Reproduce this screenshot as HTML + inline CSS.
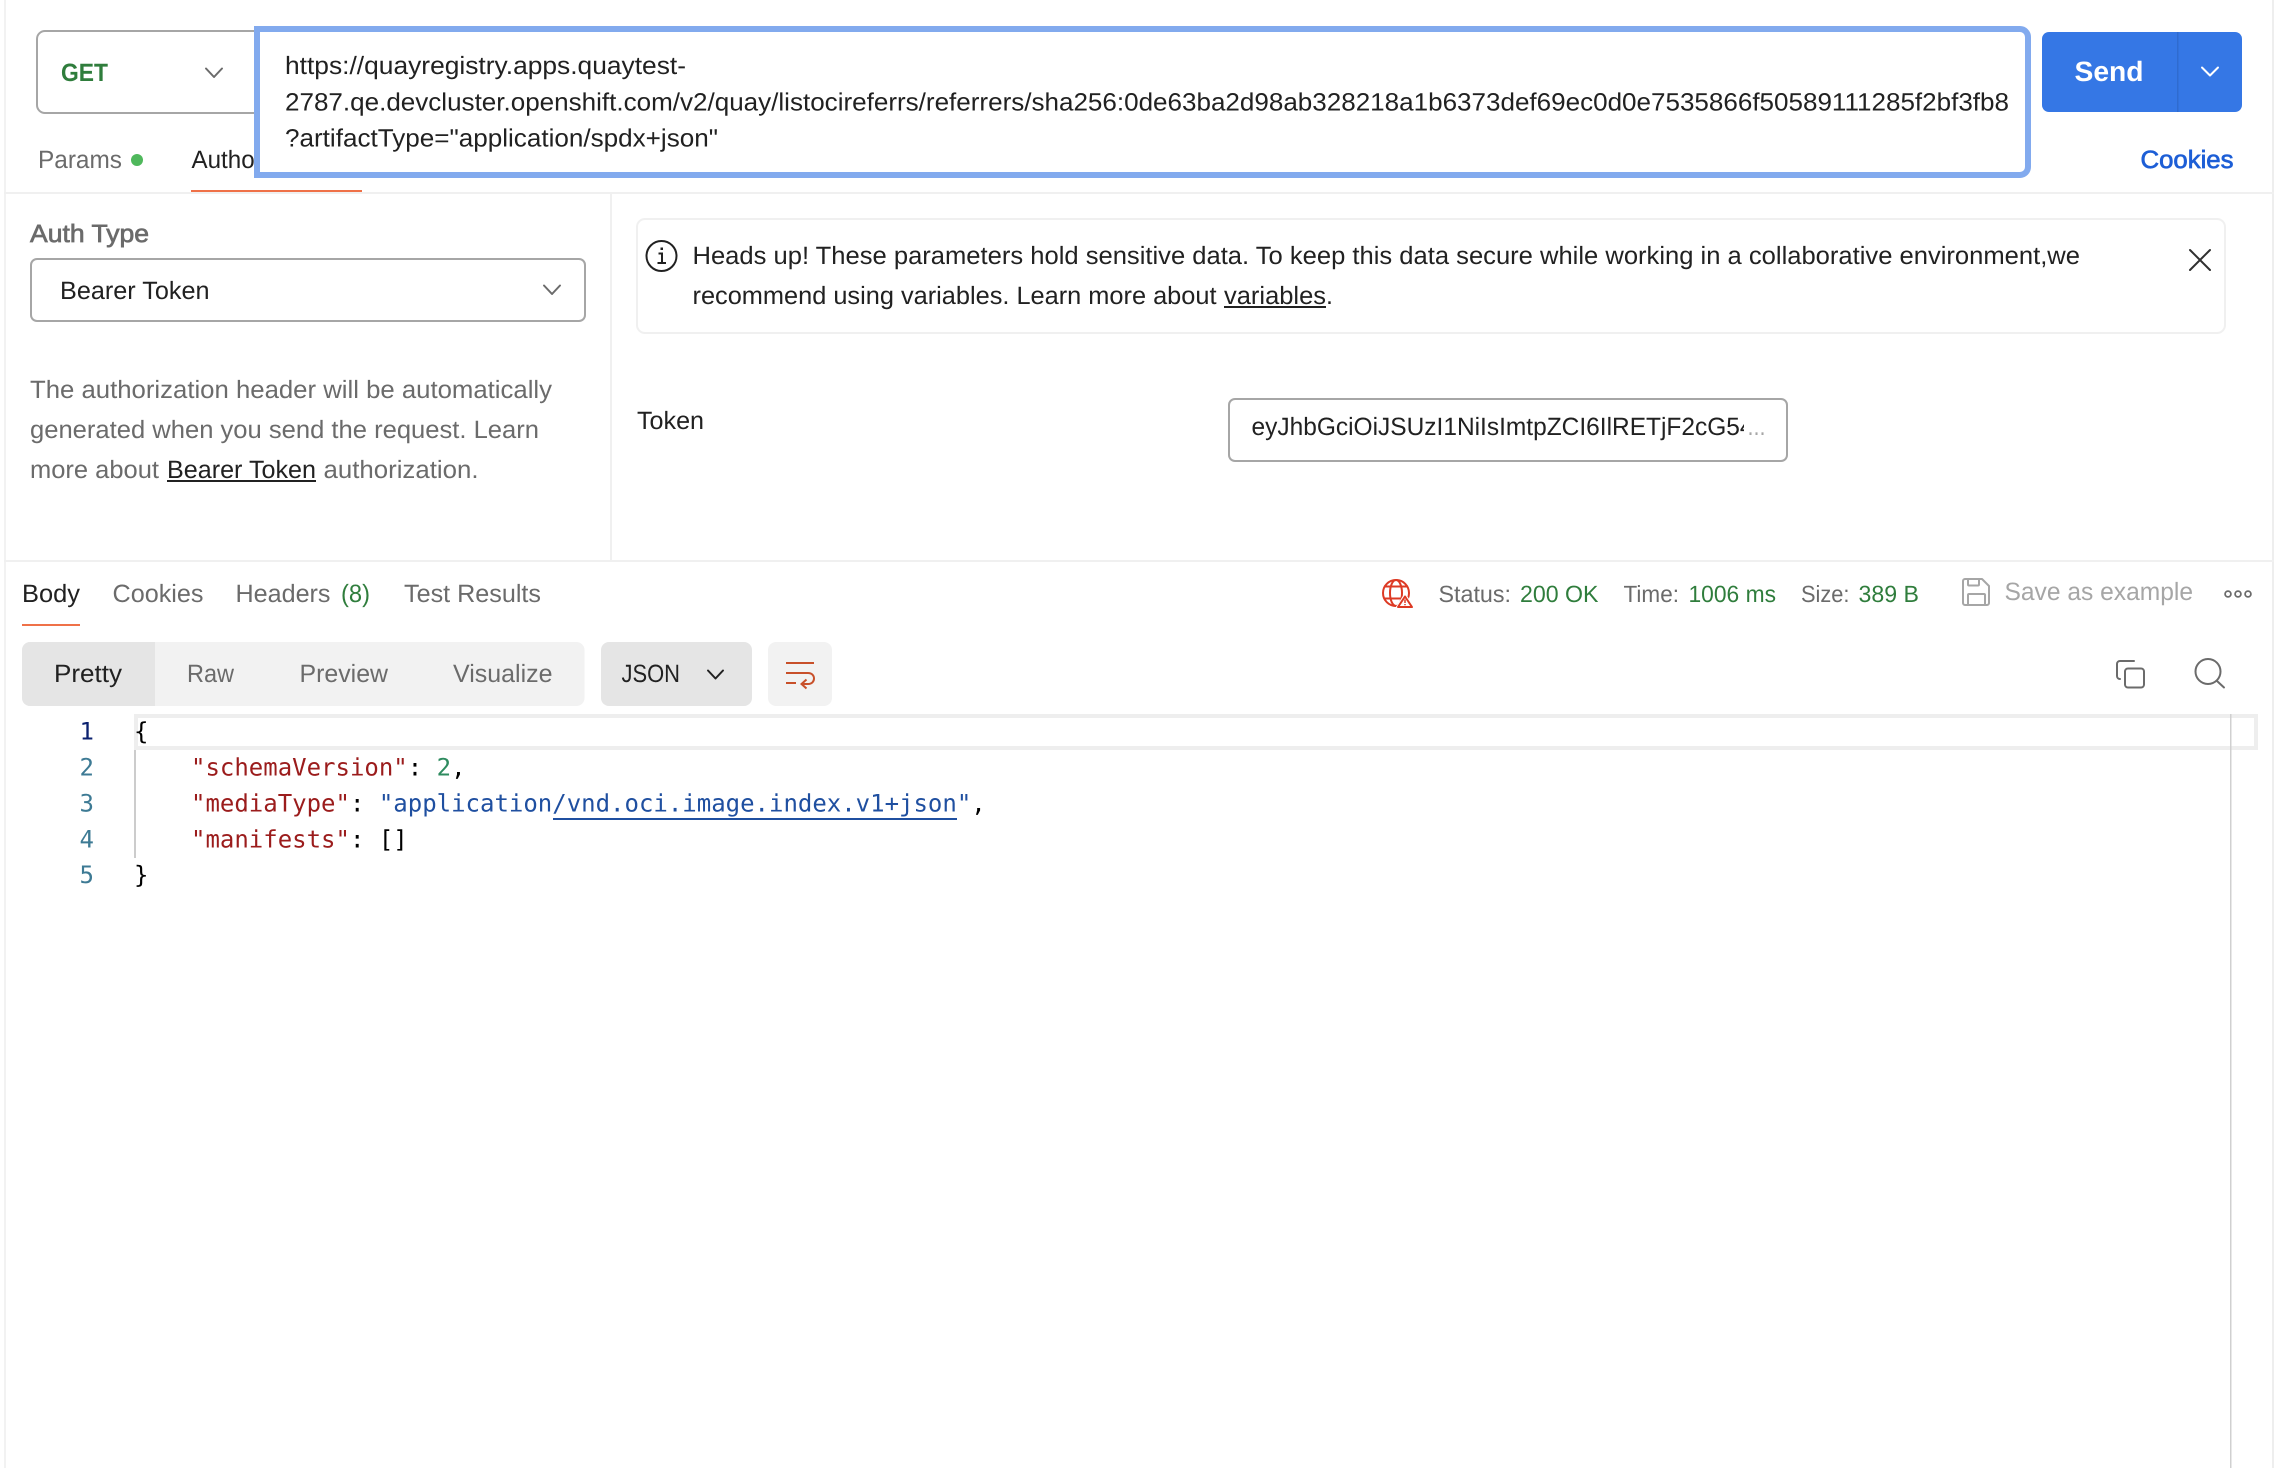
<!DOCTYPE html>
<html lang="en">
<head>
<meta charset="utf-8">
<title>Postman request</title>
<style>
html,body{margin:0;padding:0;background:#fff;width:2274px;height:1468px;overflow:hidden}
svg{display:block;position:absolute;left:0;top:0}
text{font-family:"Liberation Sans",Arial,sans-serif;font-size:25px;fill:#212121;white-space:pre;text-rendering:geometricPrecision}
.g{fill:#6b6b6b}
.gr{fill:#2f7d3c}
.m{stroke-width:.7px}
.s{font-size:23.5px}
.c{font-family:"DejaVu Sans Mono","Liberation Mono",monospace;font-size:24px;fill:#000}
.k{fill:#9b1c1c}
.v{fill:#1f4fa0}
.n{fill:#3d7a94}
.ic{fill:none;stroke:#6b6b6b;stroke-width:2;stroke-linecap:round;stroke-linejoin:round}
</style>
</head>
<body>
<svg width="2274" height="1468" viewBox="0 0 2274 1468" xmlns="http://www.w3.org/2000/svg">
<defs><clipPath id="tk"><rect x="1240" y="405" width="504" height="50"/></clipPath></defs>

<!-- page frame -->
<rect x="4" y="0" width="2" height="1468" fill="#f2f2f2"/>
<rect x="2272" y="0" width="2" height="1468" fill="#eeeeee"/>
<rect x="4" y="192" width="2270" height="2" fill="#f0f0f0"/>
<rect x="4" y="560" width="2270" height="2" fill="#f0f0f0"/>
<rect x="610" y="194" width="2" height="366" fill="#f0f0f0"/>

<!-- method selector -->
<rect x="37" y="31" width="260" height="82" rx="8" fill="#fff" stroke="#a6a6a6" stroke-width="2"/>
<text x="61" y="81" textLength="47" lengthAdjust="spacingAndGlyphs" font-weight="700" style="fill:#2f7d3c">GET</text>
<path class="ic" d="M206 68.500l8 8.500l8-8.500"/>

<!-- tabs -->
<text class="g" x="38" y="168" textLength="84" lengthAdjust="spacingAndGlyphs">Params</text>
<circle cx="137" cy="160" r="6" fill="#4fb85c"/>
<text x="191.500" y="168" textLength="141" lengthAdjust="spacingAndGlyphs">Authorization</text>
<rect x="191" y="190" width="171" height="2" fill="#ef7148"/>

<!-- URL field -->
<path d="M257 29H2020a8 8 0 0 1 8 8V167a8 8 0 0 1-8 8H257Z" fill="#fff" stroke="#82aaee" stroke-width="6"/>
<text x="285" y="74" textLength="401" lengthAdjust="spacingAndGlyphs">https://quayregistry.apps.quaytest-</text>
<text x="285" y="110.500" textLength="1724" lengthAdjust="spacingAndGlyphs">2787.qe.devcluster.openshift.com/v2/quay/listocireferrs/referrers/sha256:0de63ba2d98ab328218a1b6373def69ec0d0e7535866f50589111285f2bf3fb8</text>
<text x="285" y="146.500" textLength="433" lengthAdjust="spacingAndGlyphs">?artifactType="application/spdx+json"</text>

<!-- send -->
<rect x="2042" y="32" width="200" height="80" rx="7" fill="#3577e5"/>
<rect x="2177" y="32" width="1.500" height="80" fill="#2f6bcf"/>
<text x="2074.500" y="81" textLength="69" lengthAdjust="spacingAndGlyphs" font-weight="700" style="font-size:28px;fill:#fff">Send</text>
<path d="M2202 67.500l8 8l8-8" fill="none" stroke="#fff" stroke-width="2" stroke-linecap="round" stroke-linejoin="round"/>
<text x="2140.500" y="168" textLength="93" lengthAdjust="spacingAndGlyphs" class="m" style="fill:#1d5ed6;stroke:#1d5ed6">Cookies</text>

<!-- auth left -->
<text x="30" y="242" textLength="119" lengthAdjust="spacingAndGlyphs" class="m" style="fill:#6b6b6b;stroke:#6b6b6b">Auth Type</text>
<rect x="31" y="259" width="554" height="62" rx="6" fill="#fff" stroke="#a6a6a6" stroke-width="2"/>
<text x="60" y="299" textLength="149.500" lengthAdjust="spacingAndGlyphs">Bearer Token</text>
<path class="ic" d="M544 285.500l8 8.500l8-8.500"/>
<text class="g" x="30" y="398" textLength="522" lengthAdjust="spacingAndGlyphs">The authorization header will be automatically</text>
<text class="g" x="30" y="438" textLength="509" lengthAdjust="spacingAndGlyphs">generated when you send the request. Learn</text>
<text class="g" x="30" y="478" textLength="129" lengthAdjust="spacingAndGlyphs">more about</text>
<text x="167" y="478" textLength="149" lengthAdjust="spacingAndGlyphs">Bearer Token</text>
<rect x="167" y="480" width="149" height="2" fill="#212121"/>
<text class="g" x="323.500" y="478" textLength="155" lengthAdjust="spacingAndGlyphs">authorization.</text>

<!-- alert -->
<rect x="637" y="219" width="1588" height="114" rx="8" fill="#fff" stroke="#f0f0f0" stroke-width="2"/>
<circle cx="661.500" cy="256" r="15" fill="none" stroke="#212121" stroke-width="2"/>
<path d="M658.500 253.500h3.500v9.500M657.500 263h8.500" fill="none" stroke="#212121" stroke-width="2"/>
<rect x="660.500" y="247.500" width="2.500" height="2.500" fill="#212121"/>
<text x="692.500" y="264" textLength="1387.500" lengthAdjust="spacingAndGlyphs">Heads up! These parameters hold sensitive data. To keep this data secure while working in a collaborative environment,we</text>
<text x="692.500" y="304" textLength="524" lengthAdjust="spacingAndGlyphs">recommend using variables. Learn more about</text>
<text x="1224" y="304" textLength="102" lengthAdjust="spacingAndGlyphs">variables</text>
<rect x="1224" y="306" width="102" height="2" fill="#212121"/>
<text x="1326" y="304">.</text>
<path d="M2190 250l20 20M2210 250l-20 20" fill="none" stroke="#303030" stroke-width="2" stroke-linecap="round"/>

<!-- token -->
<text x="637" y="429" textLength="67" lengthAdjust="spacingAndGlyphs">Token</text>
<rect x="1229" y="399" width="558" height="62" rx="6" fill="#fff" stroke="#a6a6a6" stroke-width="2"/>
<text x="1251.500" y="435" textLength="502" lengthAdjust="spacingAndGlyphs" clip-path="url(#tk)">eyJhbGciOiJSUzI1NiIsImtpZCI6IlRETjF2cG54</text>
<text x="1747.500" y="435" textLength="18" lengthAdjust="spacingAndGlyphs" style="fill:#a6a6a6">...</text>

<!-- response tabs -->
<text x="22" y="602" textLength="58" lengthAdjust="spacingAndGlyphs">Body</text>
<rect x="22" y="624" width="58" height="2" fill="#ef7148"/>
<text class="g" x="112.500" y="602" textLength="91" lengthAdjust="spacingAndGlyphs">Cookies</text>
<text class="g" x="235.500" y="602" textLength="95" lengthAdjust="spacingAndGlyphs">Headers</text>
<text class="gr" x="341" y="602" textLength="29" lengthAdjust="spacingAndGlyphs">(8)</text>
<text class="g" x="404" y="602" textLength="137" lengthAdjust="spacingAndGlyphs">Test Results</text>

<!-- network globe with warning -->
<g fill="none" stroke="#dd3a24" stroke-width="2">
<circle cx="1396" cy="593" r="13"/>
<ellipse cx="1396" cy="593" rx="6" ry="13"/>
<path d="M1385 586.500H1407M1384 598.500H1401"/>
</g>
<path d="M1405 592.500L1416 610H1394Z" fill="#fff"/>
<path d="M1405 596.500L1412 607H1398Z" fill="#fff" stroke="#dd3a24" stroke-width="2" stroke-linejoin="round"/>
<path d="M1405 599.500v3.500M1405 604v1.200" stroke="#dd3a24" stroke-width="1.500" fill="none"/>

<!-- status -->
<text class="g s" x="1438.500" y="602" textLength="72.500" lengthAdjust="spacingAndGlyphs">Status:</text>
<text class="gr s" x="1520" y="602" textLength="78.500" lengthAdjust="spacingAndGlyphs">200 OK</text>
<text class="g s" x="1623.500" y="602" textLength="55.500" lengthAdjust="spacingAndGlyphs">Time:</text>
<text class="gr s" x="1688.500" y="602" textLength="87.500" lengthAdjust="spacingAndGlyphs">1006 ms</text>
<text class="g s" x="1801" y="602" textLength="48.500" lengthAdjust="spacingAndGlyphs">Size:</text>
<text class="gr s" x="1858.500" y="602" textLength="60.500" lengthAdjust="spacingAndGlyphs">389 B</text>

<!-- save -->
<g fill="none" stroke="#a6a6a6" stroke-width="2" stroke-linejoin="round">
<path d="M1965 579H1982L1989 586V603a2 2 0 0 1-2 2H1965a2 2 0 0 1-2-2V581a2 2 0 0 1 2-2Z"/>
<path d="M1968 579V584.500a1 1 0 0 0 1 1H1978a1 1 0 0 0 1-1V579"/>
<path d="M1968 605V595a1 1 0 0 1 1-1H1984a1 1 0 0 1 1 1V605"/>
</g>
<text x="2004.500" y="600" textLength="188.500" lengthAdjust="spacingAndGlyphs" style="fill:#a6a6a6">Save as example</text>
<g fill="none" stroke="#6b6b6b" stroke-width="1.800">
<circle cx="2228" cy="594" r="2.900"/><circle cx="2238" cy="594" r="2.900"/><circle cx="2248" cy="594" r="2.900"/>
</g>

<!-- response toolbar -->
<rect x="22" y="642" width="562.500" height="64" rx="8" fill="#f2f2f2"/>
<path d="M30 642H155V706H30a8 8 0 0 1-8-8V650a8 8 0 0 1 8-8Z" fill="#e5e5e5"/>
<text x="54" y="682" textLength="68" lengthAdjust="spacingAndGlyphs">Pretty</text>
<text class="g" x="187" y="682" textLength="47" lengthAdjust="spacingAndGlyphs">Raw</text>
<text class="g" x="299.500" y="682" textLength="88.500" lengthAdjust="spacingAndGlyphs">Preview</text>
<text class="g" x="453" y="682" textLength="99.500" lengthAdjust="spacingAndGlyphs">Visualize</text>
<rect x="601" y="642" width="151" height="64" rx="8" fill="#e5e5e5"/>
<text x="621.500" y="682" textLength="58.500" lengthAdjust="spacingAndGlyphs">JSON</text>
<path d="M708 670.500l7.500 8l7.500-8" fill="none" stroke="#212121" stroke-width="2" stroke-linecap="round" stroke-linejoin="round"/>
<rect x="768" y="642" width="64" height="64" rx="8" fill="#f2f2f2"/>
<g fill="none" stroke="#c8502a" stroke-width="2">
<path d="M786 663H814"/>
<path d="M786 673H808C816 673 816 684 808 684H802"/>
<path d="M786 683H796"/>
<path d="M806.500 679.500L801.500 684L806.500 688.500"/>
</g>

<!-- copy + search -->
<rect x="2125" y="668.500" width="19" height="19" rx="3" class="ic"/>
<path class="ic" d="M2134 661H2120a3 3 0 0 0-3 3V676a3 3 0 0 0 3 3"/>
<circle cx="2208" cy="671.500" r="12.500" class="ic"/>
<path class="ic" d="M2217 681L2224 687.500"/>

<!-- editor -->
<rect x="136" y="716" width="2120" height="32" fill="#fff" stroke="#eeeeee" stroke-width="4"/>
<rect x="134" y="750" width="2" height="108" fill="#cccccc"/>
<rect x="2230" y="714" width="1.500" height="754" fill="#d0d0d0"/>

<text class="c" x="79.500" y="739.500" style="fill:#0b216f">1</text>
<text class="c n" x="79.500" y="775.500">2</text>
<text class="c n" x="79.500" y="811.500">3</text>
<text class="c n" x="79.500" y="847.500">4</text>
<text class="c n" x="79.500" y="883">5</text>

<text class="c" x="134" y="739.500">{</text>
<text class="c" x="191" y="775.500"><tspan class="k">"schemaVersion"</tspan>: <tspan style="fill:#2e8b5f">2</tspan>,</text>
<text class="c" x="191" y="811.500"><tspan class="k">"mediaType"</tspan>: <tspan class="v">"application/vnd.oci.image.index.v1+json"</tspan>,</text>
<rect x="553" y="818" width="404" height="2" fill="#1f4fa0"/>
<text class="c" x="191" y="847.500"><tspan class="k">"manifests"</tspan>: []</text>
<text class="c" x="134" y="883">}</text>
</svg>
</body>
</html>
